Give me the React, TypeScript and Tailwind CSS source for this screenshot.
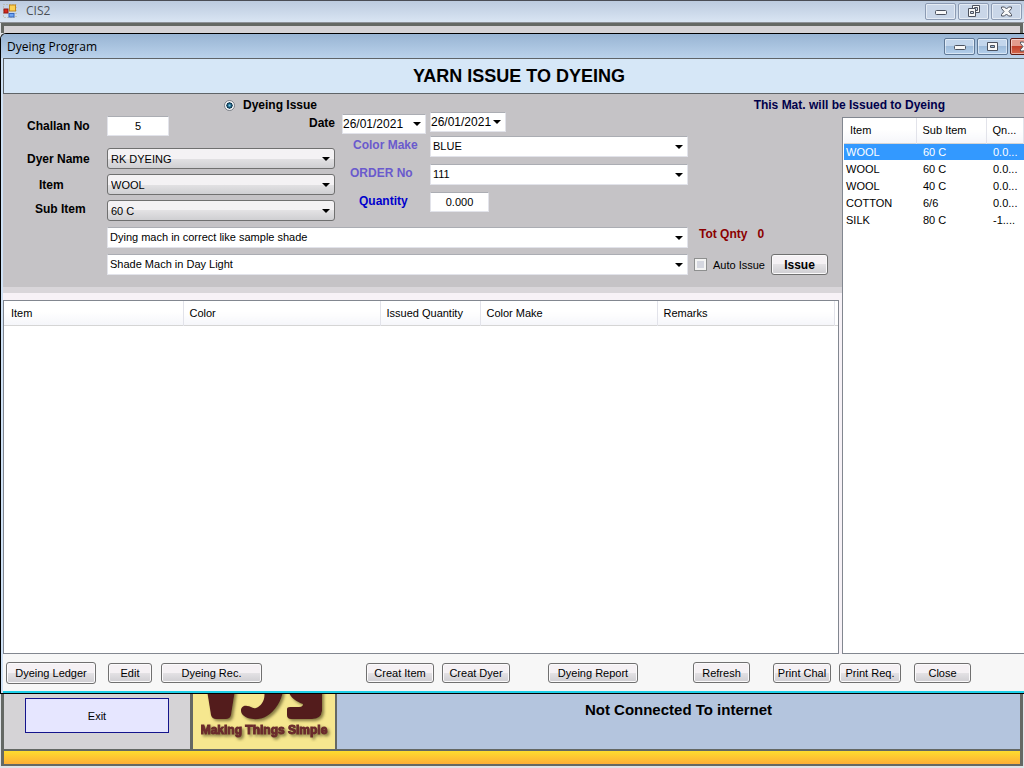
import type { ReactNode } from "react"
import { clsx } from "clsx"

const stock = [
  { item: "WOOL", sub: "60 C", qty: "0.0..." },
  { item: "WOOL", sub: "60 C", qty: "0.0..." },
  { item: "WOOL", sub: "40 C", qty: "0.0..." },
  { item: "COTTON", sub: "6/6", qty: "0.0..." },
  { item: "SILK", sub: "80 C", qty: "-1...." },
]

function Arrow({ className }: { className?: string }) {
  return (
    <svg viewBox="0 0 8 4" className={clsx("pointer-events-none h-1 w-2", className)} aria-hidden="true">
      <path d="M0 0h8L4 4z" fill="#000" />
    </svg>
  )
}

function Combo({ id, value, label, flat, className }: { id: string; value: string; label?: string; flat?: boolean; className?: string }) {
  return (
    <div className={clsx("relative", className)}>
      <select
        id={id}
        aria-label={label}
        className={clsx(
          "block h-[21px] w-full appearance-none px-[3px] outline-none",
          flat
            ? "border border-[#e2e3ea] border-t-[#abadb3] bg-white pb-px pl-[2px]"
            : "rounded-[3px] border border-[#707070] bg-linear-to-b from-[#f4f2f4] from-50% via-[#e3e2e4] via-50% to-[#cfcfd2]"
        )}
      >
        <option>{value}</option>
      </select>
      <Arrow className="absolute top-[9px] right-[5px]" />
    </div>
  )
}

function DateBox({ label, id, className }: { label?: string; id: string; className?: string }) {
  return (
    <div className={clsx("flex h-5 items-center border border-[#e2e3ea] border-t-[#abadb3] bg-white pr-1", className)}>
      <input id={id} aria-label={label} defaultValue="26/01/2021" className="w-0 flex-1 text-[12px] outline-none" />
      <button type="button" aria-label="Open calendar">
        <Arrow />
      </button>
    </div>
  )
}

function Label({ htmlFor, className, children }: { htmlFor: string; className?: string; children: ReactNode }) {
  return (
    <label htmlFor={htmlFor} className={clsx("shrink-0 text-[12px] font-bold", className)}>
      {children}
    </label>
  )
}

function PushButton({ className, children }: { className?: string; children: ReactNode }) {
  return (
    <button
      type="button"
      className={clsx(
        "shrink-0 rounded-[3px] border border-[#707070] bg-linear-to-b from-[#f5f1f4] from-50% via-[#e4e2e5] via-50% to-[#cfced2] text-center whitespace-nowrap shadow-[inset_0_0_0_1px_#fbfafb]",
        className
      )}
    >
      {children}
    </button>
  )
}

function CaptionButton({ name, className, children }: { name: string; className?: string; children: ReactNode }) {
  return (
    <button
      type="button"
      aria-label={name}
      className={clsx("flex h-[17px] w-[31px] shrink-0 items-center justify-center rounded-[2px] border shadow-[inset_0_0_0_1px_#ffffff80]", className)}
    >
      {children}
    </button>
  )
}

function Cross() {
  return (
    <svg width="13" height="11" viewBox="0 0 13 11" aria-hidden="true">
      <path d="M1.500 1h3l2 2 2-2h3v1.500L9 5.500l2.500 3V10h-3l-2-2-2 2h-3V8.500L4 5.500 1.500 2.500z" fill="#f8f8f8" stroke="#4c525f" />
    </svg>
  )
}

function Dash() {
  return (
    <svg width="12" height="6" viewBox="0 0 12 6" className="mt-1" aria-hidden="true">
      <rect x=".5" y=".5" width="11" height="4" rx="1" fill="#f8f8f8" stroke="#4c525f" />
    </svg>
  )
}

const appCaption = "border-[#8c9bb3] bg-[#c9d6e8]"
const formCaption = "border-[#5f7896] bg-linear-to-b from-[#c3d6ec] from-50% via-[#9fbcdb] via-50% to-[#b4d0ec]"
const headCell = "border-r border-[#e2e3ea] bg-linear-to-b from-white from-45% to-[#f5f6fa] text-left font-normal"

function AppTitleBar() {
  return (
    <header className="flex h-[23px] items-center border-t border-b border-t-[#4a4d55] border-b-[#8e9298] bg-linear-to-b from-[#bccbdf] to-[#d9e5f3] pr-[2px] pb-px pl-[3px]">
      <svg width="14" height="14" viewBox="0 0 14 14" aria-hidden="true">
        <rect x=".5" y=".5" width="12.500" height="13" fill="none" stroke="#b3ab86" strokeDasharray="1 2" />
        <rect x="1" y="5" width="4" height="4" fill="#d8281c" stroke="#8e1710" />
        <rect x="6.500" y="1" width="6" height="6" fill="#fbd152" stroke="#c2871b" />
        <rect x="6" y="9.500" width="5" height="3.500" fill="#6fa5f2" stroke="#3465bd" />
      </svg>
      <span className="ml-[9px] font-[Open_Sans,sans-serif] text-[12px] text-[#4b4f55]">CIS2</span>
      <div className="ml-auto flex gap-[2px]">
        <CaptionButton name="Minimize" className={appCaption}>
          <Dash />
        </CaptionButton>
        <CaptionButton name="Restore" className={appCaption}>
          <svg width="12" height="12" viewBox="0 0 12 12" aria-hidden="true">
            <path d="M4.500.5h7v7h-7z" fill="#f8f8f8" stroke="#4c525f" />
            <path d="M6.500 2.500h3v3h-3z" fill="#c9d6e8" stroke="#4c525f" />
            <path d="M.5 3.500h7v8h-7z" fill="#f8f8f8" stroke="#4c525f" />
            <path d="M2.500 6.500h3v2h-3z" fill="#c9d6e8" stroke="#4c525f" />
          </svg>
        </CaptionButton>
        <CaptionButton name="Close" className={appCaption}>
          <Cross />
        </CaptionButton>
      </div>
    </header>
  )
}

function FormTitleBar() {
  return (
    <div className="flex h-6 items-center overflow-hidden rounded-tl-[5px] bg-linear-to-b from-[#98b4d3] to-[#bad2eb] pl-[6px]">
      <h2 className="pt-px font-[Open_Sans,sans-serif] text-[12px]">Dyeing Program</h2>
      <div className="-mr-[17px] ml-auto flex gap-[2px]">
        <CaptionButton name="Minimize form" className={formCaption}>
          <Dash />
        </CaptionButton>
        <CaptionButton name="Maximize form" className={formCaption}>
          <svg width="11" height="9" viewBox="0 0 11 9" aria-hidden="true">
            <path d="M.5.5h10v8H.5z" fill="#f8f8f8" stroke="#4c525f" />
            <path d="M3.500 3.500h4v2h-4z" fill="#9fbcdb" stroke="#4c525f" />
          </svg>
        </CaptionButton>
        <CaptionButton name="Close form" className="border-[#5d1a12] bg-linear-to-b from-[#e39b8d] from-50% via-[#c2402b] via-50% to-[#d4684c]">
          <Cross />
        </CaptionButton>
      </div>
    </div>
  )
}

function IssueForm() {
  return (
    <form className="h-[175px] shrink-0">
      <div className="flex">
        <div className="w-[332px] pt-1">
          <div className="flex h-5 items-center">
            <Label htmlFor="challan" className="w-[104px] pl-6">Challan No</Label>
            <input id="challan" defaultValue="5" className="h-5 w-[62px] border border-[#e2e3ea] border-t-[#abadb3] bg-white text-center outline-none" />
            <Label htmlFor="date" className="ml-auto self-start">Date</Label>
          </div>
          <div className="mt-3 flex flex-col gap-[5px]">
            <div className="flex items-center">
              <Label htmlFor="dyer" className="w-[104px] pl-6">Dyer Name</Label>
              <Combo id="dyer" value="RK DYEING" className="flex-1" />
            </div>
            <div className="flex items-center">
              <Label htmlFor="item" className="w-[104px] pl-9">Item</Label>
              <Combo id="item" value="WOOL" className="flex-1" />
            </div>
            <div className="flex items-center">
              <Label htmlFor="subitem" className="w-[104px] self-start pl-8 leading-[18px]">Sub Item</Label>
              <Combo id="subitem" value="60 C" className="flex-1" />
            </div>
          </div>
        </div>
        <div className="ml-[7px] w-[346px]">
          <div className="flex gap-1">
            <DateBox id="date" className="mt-[2px] w-[84px]" />
            <DateBox id="date-to" label="Second date" className="w-[76px]" />
          </div>
          <div className="mt-[2px] flex flex-col gap-[7px]">
            <div className="flex items-start">
              <Label htmlFor="colormake" className="w-[88px] pl-[11px] leading-[18px] text-[#6a5acd]">Color Make</Label>
              <Combo id="colormake" value="BLUE" flat className="flex-1" />
            </div>
            <div className="flex items-start">
              <Label htmlFor="order" className="w-[88px] pl-2 leading-[18px] text-[#6a5acd]">ORDER No</Label>
              <Combo id="order" value="111" flat className="flex-1" />
            </div>
            <div className="flex items-start">
              <Label htmlFor="qty" className="w-[88px] pl-[17px] leading-[18px] text-[#0000cd]">Quantity</Label>
              <input id="qty" defaultValue="0.000" className="h-5 w-[59px] border border-[#e2e3ea] border-t-[#abadb3] bg-white text-center outline-none" />
            </div>
          </div>
        </div>
      </div>
      <div className="mt-[6px] ml-[104px] flex items-start">
        <Combo id="remark1" label="Remark" value="Dying mach in correct like sample shade" flat className="w-[581px]" />
        <span className="ml-[11px] text-[12px] font-bold text-[#8b0000]">Tot Qnty</span>
        <output className="ml-[10px] text-[12px] font-bold text-[#8b0000]">0</output>
      </div>
      <div className="mt-[6px] ml-[104px] flex items-center">
        <Combo id="remark2" label="Second remark" value="Shade Mach in Day Light" flat className="w-[581px]" />
        <label className="ml-[6px] flex items-center gap-[6px]">
          <input type="checkbox" className="h-[13px] w-[13px] appearance-none border border-[#8e8f8f] bg-[#d5d7e0] shadow-[inset_0_0_0_2px_#f4f4f4]" />
          Auto Issue
        </label>
        <PushButton className="ml-[6px] h-[21px] w-[57px] text-[12px] font-bold">Issue</PushButton>
      </div>
    </form>
  )
}

function IssuedTable() {
  return (
    <div className="mr-[3px] flex-1 border border-[#828790] bg-white">
      <table className="w-full table-fixed border-collapse">
        <thead>
          <tr className="h-6 border-b border-[#d5d5d5]">
            <th className={clsx(headCell, "w-[179px] pl-[7px]")}>Item</th>
            <th className={clsx(headCell, "w-[197px] pl-[6px]")}>Color</th>
            <th className={clsx(headCell, "w-[100px] pl-[6px]")}>Issued Quantity</th>
            <th className={clsx(headCell, "w-[177px] pl-[6px]")}>Color Make</th>
            <th className={clsx(headCell, "pl-[6px]")}>Remarks</th>
            <td className="w-[4px]" />
          </tr>
        </thead>
      </table>
    </div>
  )
}

function StockTable() {
  return (
    <aside className="mt-[5px] w-[182px] shrink-0 border border-r-0 border-[#828790] bg-white pl-px">
      <table className="w-full table-fixed border-collapse">
        <thead>
          <tr className="h-[25px] border-b border-[#d5d5d5]">
            <th className={clsx(headCell, "w-[72px] pl-[6px]")}>Item</th>
            <th className={clsx(headCell, "w-[70px] pl-[6px]")}>Sub Item</th>
            <th className={clsx(headCell, "pl-[6px]")}>Qn...</th>
          </tr>
        </thead>
        <tbody>
          {stock.map((row, i) => (
            <tr key={i} className={clsx("h-[17px]", i === 0 && "bg-[#3399ff] text-white")}>
              <td className="pl-[2px]">{row.item}</td>
              <td className="pl-[7px]">{row.sub}</td>
              <td className="pl-[7px]">{row.qty}</td>
            </tr>
          ))}
        </tbody>
      </table>
    </aside>
  )
}

function Toolbar() {
  return (
    <div className="flex h-[37px] shrink-0 items-center bg-[#f7f7f7] pl-[3px]">
      <PushButton className="h-[22px] w-[90px]">Dyeing Ledger</PushButton>
      <PushButton className="ml-3 h-5 w-[44px]">Edit</PushButton>
      <PushButton className="ml-[9px] h-5 w-[101px]">Dyeing Rec.</PushButton>
      <PushButton className="ml-[104px] h-5 w-[68px]">Creat Item</PushButton>
      <PushButton className="ml-2 h-5 w-[68px]">Creat Dyer</PushButton>
      <PushButton className="ml-[38px] h-5 w-[90px]">Dyeing Report</PushButton>
      <PushButton className="ml-[55px] h-[21px] w-[57px]">Refresh</PushButton>
      <PushButton className="ml-[23px] h-5 w-[58px]">Print Chal</PushButton>
      <PushButton className="ml-2 h-5 w-[62px]">Print Req.</PushButton>
      <PushButton className="ml-[13px] h-5 w-[57px]">Close</PushButton>
    </div>
  )
}

function Logo() {
  return (
    <svg width="142" height="55" viewBox="0 0 142 55" className="shrink-0 bg-[#f6e78f]" role="img" aria-label="Making Things Simple">
      <defs>
        <filter id="shade" x="-10%" y="-10%" width="125%" height="140%">
          <feDropShadow dx="2" dy="2" stdDeviation="1.500" floodColor="#6b6030" floodOpacity=".8" />
        </filter>
      </defs>
      <g fill="#521c1c" filter="url(#shade)">
        <path d="M14 -4H42L38 21Q37 25 33 25H23Q19 25 18 21z" />
        <path d="M71 -4H90C89 7 82 17 74 22C66 27 54 26 49 20C46 15 50 11 54 12C58 12 59 15 63 14C69 12 73 5 71 -4z" />
        <path d="M95 -4H129V17Q128 25 119 25H98Q94 25 94 21V15Q94 13 97 13H106Q110 13 110 10C104 8 97 4 95 -4z" />
      </g>
      <text x="71" y="40" textAnchor="middle" fontFamily="Liberation Sans, sans-serif" fontWeight="bold" fontSize="12" fill="#6b2a2d" stroke="#6b2a2d" strokeWidth="1" filter="url(#shade)">
        Making Things Simple
      </text>
    </svg>
  )
}

export default function App() {
  return (
    <div className="flex min-h-screen flex-col overflow-hidden bg-[#dfe3e8] font-[Liberation_Sans,Arial,sans-serif] text-[11px] leading-[14px] text-black">
      <AppTitleBar />
      <div className="mx-px h-[10px] border-x-[3px] border-t-[3px] border-[#646864] bg-[#d5d3d6]" />

      <main className="flex flex-1 flex-col rounded-tl-[6px] border-t border-b border-l border-black bg-[#cfe2f6]">
        <FormTitleBar />
        <div className="ml-[2px] flex flex-1 flex-col border-b-2 border-[#1fd0e8]">
          <div className="flex h-9 items-center justify-center border border-r-0 border-[#5f6468] bg-[#d6e7f7] pl-[10px]">
            <h1 className="text-[18px] font-bold">YARN ISSUE TO DYEING</h1>
          </div>
          <div className="flex flex-1 flex-col bg-[#c5c3c6]">
            <div className="flex h-[18px] items-end">
              <label className="ml-[221px] flex items-center gap-2 text-[12px] font-bold">
                <input
                  type="radio"
                  defaultChecked
                  className="h-[11px] w-[11px] appearance-none rounded-full border border-[#7b8087] bg-[radial-gradient(circle_at_50%_50%,#7fd0ee_0,#14506f_32%,#0d3048_46%,#f4f6f8_52%)]"
                />
                Dyeing Issue
              </label>
              <h2 className="mr-[79px] ml-auto text-[12px] font-bold text-[#00004b]">This Mat. will be Issued to Dyeing</h2>
            </div>
            <div className="flex flex-1">
              <div className="flex flex-1 flex-col">
                <IssueForm />
                <div className="h-[6px] bg-[#d9d6da]" />
                <div className="flex flex-1 flex-col bg-[#f7f2f7] pt-[7px]">
                  <IssuedTable />
                </div>
              </div>
              <StockTable />
            </div>
            <Toolbar />
          </div>
        </div>
      </main>

      <footer className="mx-px mb-[2px] border-x-[3px] border-b-2 border-[#646864] bg-[#646864]">
        <div className="flex h-[55px]">
          <div className="w-[186px] bg-[#d5d3d6] pt-1 pl-[21px]">
            <button type="button" className="h-[35px] w-[144px] border border-[#14148c] bg-[#e6e6ff]">Exit</button>
          </div>
          <div className="mr-[2px] ml-[3px] flex">
            <Logo />
          </div>
          <p className="flex-1 bg-[#b4c5de] pt-[9px] text-center text-[15px] font-bold">Not Connected To internet</p>
        </div>
        <div className="mt-[2px] h-[13px] bg-linear-to-b from-[#fddc2e] to-[#fdae35]" />
      </footer>
    </div>
  )
}
